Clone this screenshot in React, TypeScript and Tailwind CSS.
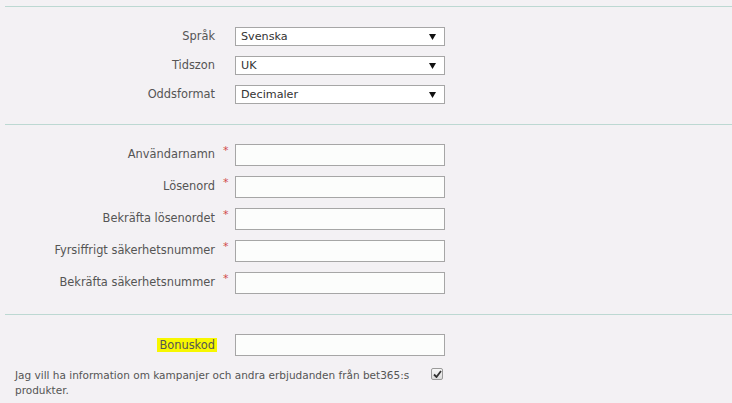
import React from "react";

const font = { fontFamily: '"DejaVu Sans", Verdana, sans-serif' };

function Arrow() {
  return (
    <svg width="7" height="6" viewBox="0 0 7 6" className="absolute right-[8px] top-[6px]">
      <polygon points="0,0 7,0 3.5,6" fill="#111" />
    </svg>
  );
}

function SelectRow({ label, value }: { label: string; value: string }) {
  return (
    <div className="flex items-center h-[19px]">
      <div className="w-[215px] text-right text-[11.4px] text-[#555]">{label}</div>
      <div className="w-[20px]" />
      <div className="relative w-[210px] h-[19px] border border-[#a6a6a6] bg-white text-[11.2px] text-[#333] pl-[5px] leading-[17px]">
        {value}
        <Arrow />
      </div>
    </div>
  );
}

function InputRow({ label, required = true }: { label: string; required?: boolean }) {
  return (
    <div className="flex items-center h-[22px]">
      <div className="w-[215px] text-right text-[11.4px] text-[#555]">{label}</div>
      <div className="w-[20px] h-[22px] relative">
        {required && (
          <span className="absolute left-[8px] top-[1px] text-[11px] text-[#d04a4a] leading-[11px]">*</span>
        )}
      </div>
      <div className="w-[210px] h-[22px] border border-[#a6a6a6] bg-[#fcfdfc]" />
    </div>
  );
}

function Divider() {
  return <div className="ml-[5px] h-px bg-[#bcd8d2]" />;
}

export default function App() {
  return (
    <div className="w-[732px] h-[403px] bg-[#f3f1f4] overflow-hidden pt-[6px]" style={font}>
      <Divider />
      <div className="flex flex-col gap-[10px] pt-[20px] pb-[20px]">
        <SelectRow label="Språk" value="Svenska" />
        <SelectRow label="Tidszon" value="UK" />
        <SelectRow label="Oddsformat" value="Decimaler" />
      </div>
      <Divider />
      <div className="flex flex-col gap-[10px] pt-[19px] pb-[20px]">
        <InputRow label="Användarnamn" />
        <InputRow label="Lösenord" />
        <InputRow label="Bekräfta lösenordet" />
        <InputRow label="Fyrsiffrigt säkerhetsnummer" />
        <InputRow label="Bekräfta säkerhetsnummer" />
      </div>
      <Divider />
      <div className="pt-[19px]">
        <div className="flex items-center h-[22px]">
          <div className="w-[217px] flex justify-end">
            <span className="bg-[#f7f700] text-[11.4px] text-[#555] px-[2px] leading-[14px]">Bonuskod</span>
          </div>
          <div className="w-[18px]" />
          <div className="w-[210px] h-[22px] border border-[#a6a6a6] bg-[#fcfdfc]" />
        </div>
        <div className="flex items-start mt-[12px] pl-[15px]">
          <div className="w-[395px] text-[10.5px] text-[#555] leading-[15px]">
            Jag vill ha information om kampanjer och andra erbjudanden från bet365:s produkter.
          </div>
          <div className="ml-[21px] w-[12px] h-[12px] rounded-[2px] border border-[#9a9a9a] bg-gradient-to-b from-[#f8f8f8] to-[#dcdcdc] flex items-center justify-center">
            <svg width="9" height="8" viewBox="0 0 9 8">
              <path d="M1 4.5 L3.5 7 L8 1" stroke="#333" strokeWidth="1.8" fill="none" />
            </svg>
          </div>
        </div>
      </div>
    </div>
  );
}
